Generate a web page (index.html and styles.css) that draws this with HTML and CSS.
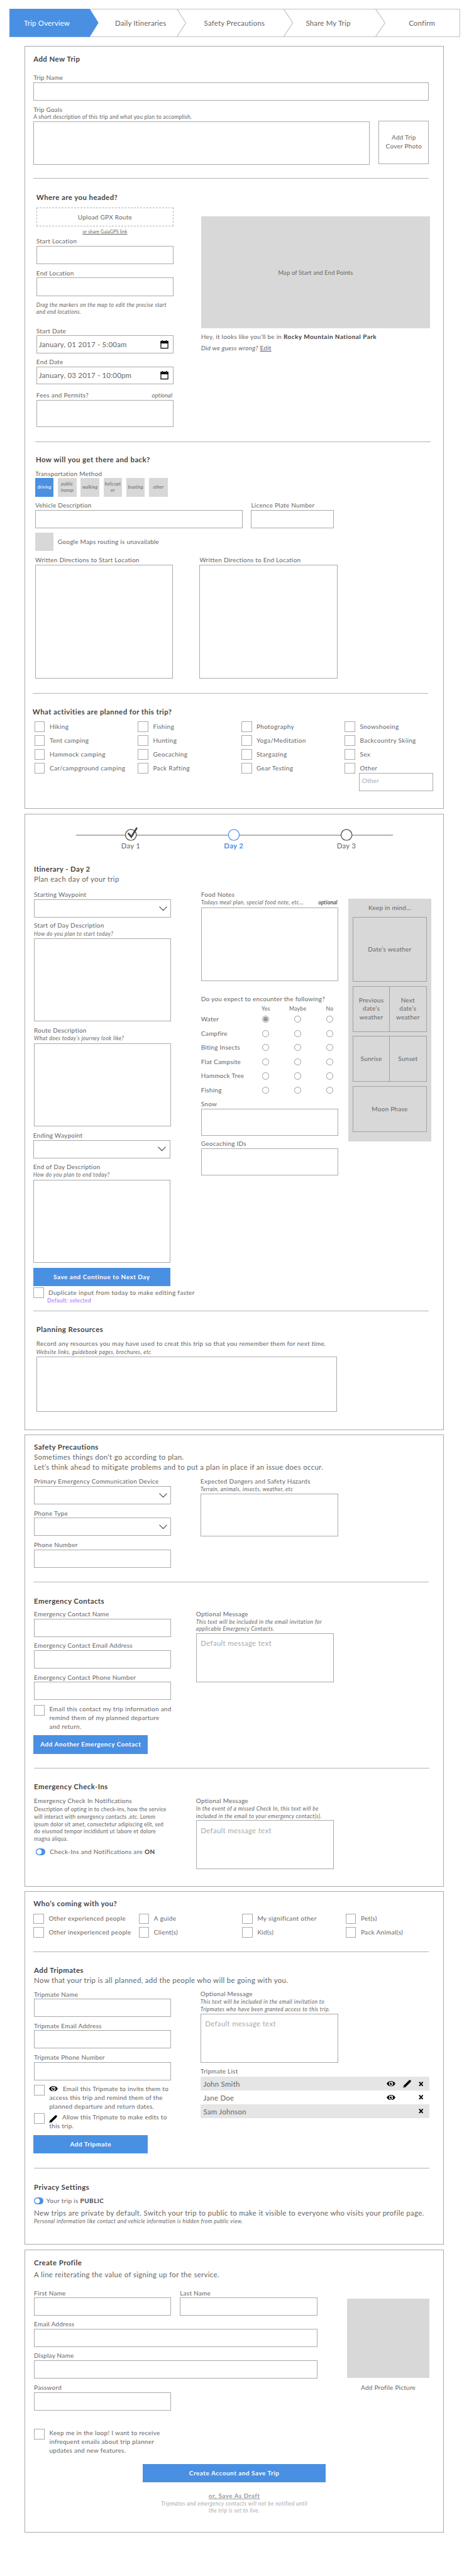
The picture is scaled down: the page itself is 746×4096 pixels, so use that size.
FILE: index.html
```html
<!DOCTYPE html>
<html lang="en">
<head>
<meta charset="utf-8">
<title>Trip Planner</title>
<link rel="stylesheet" href="styles.css">
</head>
<body>
<svg class="defs" width="0" height="0" aria-hidden="true">
  <symbol id="eye" viewBox="0 0 15 9"><path d="M0 4.5C2 1.5 4.600 0 7.500 0S13 1.500 15 4.500C13 7.500 10.400 9 7.500 9S2 7.500 0 4.500Z" fill="#000"/><circle cx="7.500" cy="4.500" r="3.500" fill="#fff"/><circle cx="7.500" cy="4.500" r="2.100" fill="#000"/><circle cx="8.200" cy="3.700" r=".9" fill="#fff"/></symbol>
  <symbol id="pencil" viewBox="0 0 14 14"><path d="M.3 13.700.9 10.300 9.900 1.300Q11.600-.3 13.200.9 14.200 2.200 12.900 4L3.800 13Z" fill="#000"/><path d="M1.300 11.100 2.900 12.700 1.100 13Z" fill="#fff"/></symbol>
  <symbol id="cross" viewBox="0 0 8 8"><path d="M1.200 1 6.800 7M6.800 1 1.200 7" stroke="#000" stroke-width="1.900"/><path d="M.3.900H2.600M5.400.900H7.700M.3 7.100H2.600M5.400 7.100H7.700" stroke="#000" stroke-width=".9"/></symbol>
  <symbol id="calendar" viewBox="0 0 14 15"><path d="M1 2H13V13.500H1Z" fill="#fff" stroke="#000" stroke-width="1.300"/><path d="M.4 1.500H13.600V5.500H.4Z" fill="#000"/><path d="M3.700 0V2.800M10.300 0V2.800" stroke="#000" stroke-width="1.800"/><path d="M3.700 1.600V3.200M10.300 1.600V3.200" stroke="#888" stroke-width=".7"/></symbol>
  <symbol id="chevron" viewBox="0 0 14 8"><path d="M.6.600 7 7.200 13.400.6" fill="none" stroke="#444" stroke-width="1.200"/></symbol>
</svg>
<div class="page">
  <nav class="steps">
    <svg class="steps-shape" width="769" height="48" viewBox="0 0 769 48"><path d="M.5.500H768.500V47.500H.5Z" fill="none" stroke="#b9b9b9"/><path d="M0 0H137L152 24 137 48H0Z" fill="#4a90e2"/><path d="M286 .5 301 24 286 47.500M468 .5 483.500 24 468 47.500M625 .5 641 24 625 47.500" fill="none" stroke="#a5a5a5"/></svg>
    <span class="step active">Trip Overview</span><span class="step">Daily Itineraries</span><span class="step">Safety Precautions</span><span class="step">Share My Trip</span><span class="step">Confirm</span>
  </nav>

  <main>
  <div class="panel panel-overview">
    <section class="trip">
      <h2 class="wide">Add New Trip</h2>
      <label class="wide">Trip Name</label>
      <div class="box wide"></div>
      <label class="wide">Trip Goals</label>
      <p class="hint roman wide">A short description of this trip and what you plan to accomplish.</p>
      <div class="box"></div>
      <div class="box cover">Add Trip<br>Cover Photo</div>
    </section>
    <hr class="hr-57">
    <section class="where">
      <div class="col where-form">
        <h2>Where are you headed?</h2>
        <div class="upload">Upload GPX Route</div>
        <a class="share">or share GaiaGPS link</a>
        <label>Start Location</label>
        <div class="box"></div>
        <label>End Location</label>
        <div class="box"></div>
        <p class="hint drag">Drag the markers on the map to edit the precise start<br>and end locations.</p>
        <label>Start Date</label>
        <div class="box date"><span>January, 01 2017 - 5:00am</span><svg width="14" height="15"><use href="#calendar"/></svg></div>
        <label>End Date</label>
        <div class="box date"><span>January, 03 2017 - 10:00pm</span><svg width="14" height="15"><use href="#calendar"/></svg></div>
        <label class="split"><span>Fees and Permits?</span><em>optional</em></label>
        <div class="box"></div>
      </div>
      <div class="where-map">
        <div class="map">Map of Start and End Points</div>
        <p class="guess">Hey, it looks like you’ll be in <b>Rocky Mountain National Park</b></p>
        <p class="wrong"><em>Did we guess wrong?</em> <u>Edit</u></p>
      </div>
    </section>
    <hr class="hr-60">
    <section class="travel col">
      <h2>How will you get there and back?</h2>
      <label>Transportation Method</label>
      <div class="tiles"><span class="tile on">driving</span><span class="tile">public<br>transp</span><span class="tile">walking</span><span class="tile">helicopt<br>er</span><span class="tile">boating</span><span class="tile">other</span></div>
      <div class="pair vehicle"><label>Vehicle Description</label><label>Licence Plate Number</label></div>
      <div class="pair vehicle"><div class="box"></div><div class="box"></div></div>
      <div class="routing"><span class="swatch"></span>Google Maps routing is unavailable</div>
      <div class="pair written"><label>Written Directions to Start Location</label><label>Written Directions to End Location</label></div>
      <div class="pair written"><div class="box"></div><div class="box"></div></div>
    </section>
    <hr class="hr-56">
    <section class="activities">
      <h2>What activities are planned for this trip?</h2>
      <div class="checks">
        <span class="check">Hiking</span><span class="check">Fishing</span><span class="check">Photography</span><span class="check">Snowshoeing</span>
        <span class="check">Tent camping</span><span class="check">Hunting</span><span class="check">Yoga/Meditation</span><span class="check">Backcountry Skiing</span>
        <span class="check">Hammock camping</span><span class="check">Geocaching</span><span class="check">Stargazing</span><span class="check">Sex</span>
        <span class="check">Car/campground camping</span><span class="check">Pack Rafting</span><span class="check">Gear Testing</span><span class="check">Other</span>
      </div>
      <div class="box other">Other</div>
    </section>
  </div>

  <div class="panel panel-itinerary">
    <div class="stepper">
      <svg width="541" height="26" viewBox="0 0 541 26"><path d="M0 14H541" stroke="#b3b3b3" stroke-width="2"/><g fill="#fff" stroke-width="1.300"><circle cx="93.500" cy="13.500" r="9.300" stroke="#444"/><circle cx="269.200" cy="13.500" r="9.300" stroke="#4a90e2"/><circle cx="461.500" cy="13.500" r="9.300" stroke="#444"/></g><path d="M89.500 11.300 94.300 16.900 103.300 2.200" fill="none" stroke="#444" stroke-width="3" stroke-linecap="round"/></svg>
      <div class="days"><span>Day 1</span><b>Day 2</b><span>Day 3</span></div>
    </div>
    <h2 class="day-title">Itinerary - Day 2</h2>
    <p class="sub day-sub">Plan each day of your trip</p>
    <section class="day">
      <div class="col day-left">
        <label>Starting Waypoint</label>
        <div class="box select"><svg width="14" height="8"><use href="#chevron"/></svg></div>
        <label>Start of Day Description</label>
        <p class="hint">How do you plan to start today?</p>
        <div class="box"></div>
        <label>Route Description</label>
        <p class="hint high">What does today’s journey look like?</p>
        <div class="box"></div>
        <label class="nudge">Ending Waypoint</label>
        <div class="box select nudge"><svg width="14" height="8"><use href="#chevron"/></svg></div>
        <label class="nudge">End of Day Description</label>
        <p class="hint high nudge">How do you plan to end today?</p>
        <div class="box nudge"></div>
        <div class="button nudge">Save and Continue to Next Day</div>
        <span class="check nudge">Duplicate input from today to make editing faster</span>
        <b class="default">Default: selected</b>
      </div>
      <div class="col day-mid">
        <label>Food Notes</label>
        <p class="hint high split"><span>Todays meal plan, special food note, etc…</span><b>optional</b></p>
        <div class="box"></div>
        <label>Do you expect to encounter the following?</label>
        <div class="radios head"><span></span><span>Yes</span><span>Maybe</span><span>No</span></div>
        <div class="radios"><span>Water</span><i class="on"></i><i></i><i></i></div>
        <div class="radios"><span>Campfire</span><i></i><i></i><i></i></div>
        <div class="radios"><span>Biting Insects</span><i></i><i></i><i></i></div>
        <div class="radios"><span>Flat Campsite</span><i></i><i></i><i></i></div>
        <div class="radios"><span>Hammock Tree</span><i></i><i></i><i></i></div>
        <div class="radios"><span>Fishing</span><i></i><i></i><i></i></div>
        <label>Snow</label>
        <div class="box"></div>
        <label>Geocaching IDs</label>
        <div class="box"></div>
      </div>
      <aside class="mind">
        <span class="mind-title">Keep in mind…</span>
        <span class="cell wide">Date’s weather</span>
        <span class="cell">Previous<br>date’s<br>weather</span><span class="cell second">Next<br>date’s<br>weather</span>
        <span class="cell">Sunrise</span><span class="cell second">Sunset</span>
        <span class="cell wide">Moon Phase</span>
      </aside>
    </section>
    <hr class="hr-57">
    <section class="resources col">
      <h2>Planning Resources</h2>
      <label>Record any resources you may have used to creat this trip so that you remember them for next time.</label>
      <p class="hint">Website links, guidebook pages, brochures, etc</p>
      <div class="box"></div>
    </section>
  </div>

  <div class="panel panel-safety">
    <section class="safety">
      <h2>Safety Precautions</h2>
      <p class="sub">Sometimes things don’t go according to plan.<br>Let’s think ahead to mitigate problems and to put a plan in place if an issue does occur.</p>
      <div class="cols">
        <div class="col safety-left">
          <label>Primary Emergency Communication Device</label>
          <div class="box select"><svg width="14" height="8"><use href="#chevron"/></svg></div>
          <label>Phone Type</label>
          <div class="box select"><svg width="14" height="8"><use href="#chevron"/></svg></div>
          <label>Phone Number</label>
          <div class="box"></div>
        </div>
        <div class="col safety-right">
          <label>Expected Dangers and Safety Hazards</label>
          <p class="hint">Terrain, animals, insects, weather, etc</p>
          <div class="box"></div>
        </div>
      </div>
    </section>
    <hr class="hr-57">
    <section class="contacts">
      <h2>Emergency Contacts</h2>
      <div class="cols near">
        <div class="col contacts-left">
          <label>Emergency Contact Name</label>
          <div class="box"></div>
          <label>Emergency Contact Email Address</label>
          <div class="box"></div>
          <label>Emergency Contact Phone Number</label>
          <div class="box"></div>
          <span class="check long">Email this contact my trip information and<br>remind them of my planned departure<br>and return.</span>
          <div class="button short">Add Another Emergency Contact</div>
        </div>
        <div class="col contacts-right">
          <label>Optional Message</label>
          <p class="hint">This text will be included in the email invitation for<br>applicable Emergency Contacts.</p>
          <div class="box message">Default message text</div>
        </div>
      </div>
    </section>
    <hr class="hr-58">
    <section class="checkins">
      <h2>Emergency Check-Ins</h2>
      <div class="cols near">
        <div class="col checkins-left">
          <label>Emergency Check In Notifications</label>
          <p class="hint roman desc">Description of opting in to check-ins, how the service<br>will interact with emergency contacts ,etc. Lorem<br>ipsum dolor sit amet, consectetur adipiscing elit, sed<br>do eiusmod tempor incididunt ut labore et dolore<br>magna aliqua.</p>
          <p class="toggle"><i></i><span>Check-Ins and Notifications are <b>ON</b></span></p>
        </div>
        <div class="col checkins-right">
          <label>Optional Message</label>
          <p class="hint">In the event of a missed Check In, this text will be<br>included in the email to your emergency contact(s).</p>
          <div class="box message">Default message text</div>
        </div>
      </div>
    </section>
  </div>

  <div class="panel panel-share">
    <section class="who">
      <h2>Who’s coming with you?</h2>
      <div class="checks">
        <span class="check">Other experienced people</span><span class="check">A guide</span><span class="check">My significant other</span><span class="check">Pet(s)</span>
        <span class="check">Other inexperienced people</span><span class="check">Client(s)</span><span class="check">Kid(s)</span><span class="check">Pack Animal(s)</span>
      </div>
    </section>
    <hr class="hr-57">
    <section class="mates">
      <h2>Add Tripmates</h2>
      <p class="sub">Now that your trip is all planned, add the people who will be going with you.</p>
      <div class="cols">
        <div class="col mates-left">
          <label>Tripmate Name</label>
          <div class="box"></div>
          <label>Tripmate Email Address</label>
          <div class="box"></div>
          <label>Tripmate Phone Number</label>
          <div class="box"></div>
          <span class="check long"><span><svg class="glyph" width="15" height="9"><use href="#eye"/></svg>Email this Tripmate to invite them to<br>access this trip and remind them of the<br>planned departure and return dates.</span></span>
          <span class="check long"><span><svg class="glyph pen" width="14" height="14"><use href="#pencil"/></svg>Allow this Tripmate to make edits to<br>this trip.</span></span>
          <div class="button short">Add Tripmate</div>
        </div>
        <div class="col mates-right">
          <label>Optional Message</label>
          <p class="hint">This text will be included in the email invitation to<br>Tripmates who have been granted access to this trip.</p>
          <div class="box message">Default message text</div>
          <label>Tripmate List</label>
          <ul class="list">
            <li><span>John Smith</span><svg width="15" height="9"><use href="#eye"/></svg><svg width="14" height="14"><use href="#pencil"/></svg><svg width="8" height="8"><use href="#cross"/></svg></li>
            <li><span>Jane Doe</span><svg width="15" height="9"><use href="#eye"/></svg><i></i><svg width="8" height="8"><use href="#cross"/></svg></li>
            <li><span>Sam Johnson</span><i></i><i></i><svg width="8" height="8"><use href="#cross"/></svg></li>
          </ul>
        </div>
      </div>
    </section>
    <hr class="hr-58">
    <section class="privacy col">
      <h2>Privacy Settings</h2>
      <p class="toggle"><i></i><span>Your trip is <b>PUBLIC</b></span></p>
      <p class="sub">New trips are private by default. Switch your trip to public to make it visible to everyone who visits your profile page.</p>
      <p class="hint">Personal information like contact and vehicle information is hidden from public view.</p>
    </section>
  </div>

  <div class="panel panel-profile">
    <section class="profile">
      <h2>Create Profile</h2>
      <p class="sub">A line reiterating the value of signing up for the service.</p>
      <div class="profile-row">
        <div class="profile-form">
          <label>First Name</label><label>Last Name</label>
          <div class="box"></div><div class="box"></div>
          <label class="wide">Email Address</label>
          <div class="box wide"></div>
          <label class="wide">Display Name</label>
          <div class="box wide"></div>
          <label class="wide">Password</label>
          <div class="box"></div>
          <span class="check long wide">Keep me in the loop! I want to receive<br>infrequent emails about trip planner<br>updates and new features.</span>
        </div>
        <div class="avatar"><div class="avatar-pic"></div><span>Add Profile Picture</span></div>
      </div>
      <div class="submit">
        <div class="button">Create Account and Save Trip</div>
        <a class="draft">or, Save As Draft</a>
        <p class="hint">Tripmates and emergency contacts will not be notified until<br>the trip is set to live.</p>
      </div>
    </section>
  </div>
  </main>
</div>
</body>
</html>
```
FILE: styles.css
```css
* { box-sizing: border-box; margin: 0; padding: 0; }
html, body { background: #fff; }
body { overflow-x: hidden; }
.defs { position: absolute; }

.page {
  zoom: 0.93218;
  width: 800px;
  height: 4394px;
  padding-top: 15px;
  overflow: hidden;
  font: 10.7px/14px Lato, "Liberation Sans", sans-serif;
  letter-spacing: .28px;
  color: #666;
}

/* text */
h2 { font-size: 12.25px; line-height: 16px; font-weight: bold; letter-spacing: .48px; color: #444; }
b { color: #444; letter-spacing: .5px; }
label { display: block; padding-bottom: .6px; white-space: nowrap; }
.sub { font-size: 12.25px; line-height: 17.2px; letter-spacing: .36px; white-space: nowrap; }
.hint { font-size: 9.2px; line-height: 12.3px; letter-spacing: .44px; font-style: italic; padding-bottom: .4px; white-space: nowrap; }
.hint.roman { font-style: normal; letter-spacing: .22px; }
.hint.high { padding-bottom: 1.700px; }
.hint b { font-size: 9.2px; font-weight: 600; letter-spacing: .1px; }
.split { display: flex; justify-content: space-between; padding-right: 2px; }

/* frames and shared controls */
.panel { width: 715px; margin-left: 42px; border: 1px solid #aaa; }
.col { display: grid; grid-template-columns: minmax(0, 1fr); align-items: end; align-content: start; }
.box { align-self: stretch; border: 1px solid #aaa; }
.wide { grid-column: 1 / -1; }
hr { border: 0; height: 1px; width: 675px; background: #b4b4b4; }
.hr-56 { margin-left: 12.500px; }
.hr-57 { margin-left: 14px; }
.hr-58 { margin-left: 15px; }
.hr-60 { margin-left: 17px; }
.nudge { margin-left: -1.500px; margin-right: 1.500px; }
.select { display: flex; align-items: center; justify-content: flex-end; padding-right: 6px; }
.message { padding: 9px 7px; font-size: 12.25px; line-height: 16px; color: #aaa; letter-spacing: .36px; }
.button { display: grid; place-items: center; height: 31.700px; background: #4a90e2; color: #fff; font-weight: bold; letter-spacing: .55px; }
.button.short { width: 195.500px; margin-left: -1px; }
.check { display: flex; align-items: center; gap: 8px; height: 16px; letter-spacing: .38px; white-space: nowrap; }
.check::before { content: ""; flex: none; width: 16px; height: 16px; border: 1px solid #aaa; }
.check.long { height: auto; align-items: flex-start; line-height: 15px; letter-spacing: .3px; }
.checks { display: grid; grid-auto-rows: 16px; row-gap: 7.400px; }
.toggle { display: flex; align-items: center; gap: 5px; letter-spacing: .38px; }
.toggle i { width: 16px; height: 11.500px; border-radius: 6px; background: radial-gradient(circle at 5.800px 50%, #fff 4.100px, #4a90e2 4.600px); }
.cols { display: grid; grid-template-columns: 234px 235px; column-gap: 50px; }
.cols.near { column-gap: 42.500px; }

/* progress bar */
.steps { position: relative; display: grid; grid-template-columns: repeat(5, 160px); height: 48px; margin-bottom: 15px; align-items: center; text-align: center; font-size: 12.25px; letter-spacing: .22px; }
.steps-shape { position: absolute; left: 16px; top: 0; }
.step { position: relative; }
.step.active { color: #fff; }

/* trip overview */
.panel-overview { height: 1302px; }
.trip { display: grid; grid-template: 30.300px 31.200px 31.500px 22.400px 12.600px 74px / 574px 86px; column-gap: 15px; height: 225px; padding-left: 14px; align-items: end; align-content: start; }
.cover { display: grid; place-content: center; text-align: center; line-height: 15px; margin: -1.500px 0 1.500px; }
.where { display: grid; grid-template-columns: 234px 391px; column-gap: 47px; height: 448px; padding-left: 19px; }
.where-form { grid-template-rows: 40.300px 40.700px 15px 18px 32px 22.300px 31.700px 33.700px 33.300px 31px 22px 31px 26px 47px; }
.upload { height: 31.500px; display: grid; place-items: center; border: 1px dashed #b0b0b0; }
.share { justify-self: center; font-size: 7.700px; line-height: 11px; letter-spacing: .2px; text-decoration: underline; }
.hint.drag { line-height: 12px; letter-spacing: .4px; padding: 0; }
.date { display: flex; align-items: center; justify-content: space-between; padding: 0 7px 0 3px; font-size: 12.25px; letter-spacing: .25px; }
.split em { letter-spacing: .1px; font-size: 10px; }
.map { display: grid; place-items: center; height: 191.500px; margin-top: 64px; background: #d8d8d8; font-size: 10px; letter-spacing: .2px; }
.guess { margin-top: 7.400px; }
.wrong { margin-top: 5px; }
.travel { grid-template-rows: 38.300px 23.200px 31.500px 23px 31px 39px 23px 195px; height: 428px; padding-left: 17px; }
.travel h2 { padding-left: 1px; }
.tiles { display: flex; gap: 7.400px; }
.tile { display: grid; place-content: center; width: 31.500px; height: 31.500px; background: #d8d8d8; font-size: 7.700px; line-height: 11px; font-style: italic; letter-spacing: .25px; text-align: center; }
.tile.on { background: #4a90e2; color: #fff; }
.pair { display: grid; align-self: stretch; align-items: end; }
.vehicle { grid-template-columns: 353.500px 141px; column-gap: 15px; }
.written { grid-template-columns: 234.500px 235px; column-gap: 46px; }
.routing { display: flex; align-items: center; gap: 7px; height: 31.500px; line-height: 19px; }
.swatch { width: 31.500px; height: 31.500px; background: #d8d8d8; }
.activities { padding: 24.300px 0 0 12.500px; }
.activities .checks { grid-template-columns: repeat(3, 176.500px) auto; margin: 8.700px 0 0 3px; }
.other { width: 126.500px; height: 31px; margin-left: 557px; padding: 6px 4px; color: #aaa; }

/* itinerary */
.panel-itinerary { height: 1051px; margin-top: 8px; }
.stepper { width: 541px; margin: 22px 0 0 86.500px; height: 39px; }
.stepper svg { display: block; }
.days { display: grid; grid-template-columns: 187px 164.400px 220.200px; margin-top: -2px; text-align: center; font-size: 12.25px; line-height: 16px; }
.days b { color: #4a90e2; letter-spacing: .3px; }
.day-title { margin: 25.300px 0 0 15px; }
.day-sub { margin-left: 15px; }
.day { display: grid; grid-template-columns: 234px 234.500px 141px; column-gap: 17px; height: 727px; padding-left: 15px; }
.day-left { grid-template-rows: 25.500px 31.300px 20.900px 14.500px 142px 22.500px 14.600px 142px 22.700px 31.200px 22.300px 14.500px 142.200px 39.500px 19.300px 11.500px; }
.day-mid { grid-template-rows: 24.700px 14.500px 126.300px 37.900px 14.700px repeat(6, 24.200px) 19.200px 47px 20.500px 46.500px; margin-left: 34px; margin-right: -34px; }
.mind { margin: 24.800px -34px 0 34px; }
.default { padding-left: 22.500px; font-size: 9.2px; line-height: 12px; color: #bd8cff; letter-spacing: .35px; }
.radios { display: grid; grid-template-columns: 83.200px repeat(3, 54.600px); align-self: stretch; align-items: center; white-space: nowrap; }
.radios i { justify-self: center; width: 12px; height: 12px; border: 1px solid #999; border-radius: 50%; }
.radios i.on { background: radial-gradient(circle, #999 3.600px, #fff 4.200px); }
.radios.head { font-size: 9.2px; text-align: center; align-items: end; margin-bottom: -2px; letter-spacing: .35px; }
.mind { display: grid; grid-template: 31px 110px 7.700px 78px 7px 78px 8px 78px / 1fr 1fr; height: 413.400px; padding: 0 7.500px; background: #d8d8d8; text-align: center; line-height: 14.600px; }
.mind-title { grid-column: 1 / -1; align-self: end; padding-bottom: 8.400px; }
.cell { display: grid; place-content: center; border: 1px solid #a2a2a2; }
.cell:nth-child(2) { grid-row: 2; }
.cell:nth-child(3), .cell:nth-child(4) { grid-row: 4; }
.cell:nth-child(5), .cell:nth-child(6) { grid-row: 6; }
.cell:nth-child(7) { grid-row: 8; }
.cell.second { border-left: 0; }
.resources { grid-template-rows: 39.800px 23.600px 14.100px 94px; width: 531.500px; padding-left: 19px; }

/* safety */
.panel-safety { height: 771px; margin-top: 8px; }
.safety { height: 250px; padding: 13.300px 0 0 15px; }
.safety-left { grid-template-rows: 23.200px 31.500px 22.500px 31px 23px 31px; }
.safety-right { grid-template-rows: 23.100px 12.800px 73.500px; }
.contacts { height: 316.500px; padding: 24.700px 0 0 15px; }
.contacts-left { grid-template-rows: 21.300px 31px 23px 31px 23px 31px 53px 38.700px; }
.contacts-right { grid-template-rows: 21.200px 25.100px 83.500px; }
.checkins { padding: 24px 0 0 15px; }
.checkins-left { grid-template-rows: 22.900px 65.100px 21.500px; }
.checkins-right { grid-template-rows: 22.900px 25.600px 83px; }
.desc { line-height: 12.600px; }
.checkins .toggle { gap: 7.500px; padding-left: 3.500px; }

/* sharing */
.panel-share { height: 603px; margin-top: 8px; }
.who { height: 101.500px; padding: 13px 0 0 14px; }
.who .checks { grid-template-columns: 179.500px 176.500px 176.500px auto; margin-top: 9px; }
.mates { height: 368.500px; padding: 23.800px 0 0 15px; }
.mates-left { grid-template-rows: 23.200px 31px 22.500px 31px 23px 31.500px 52.400px 33.900px 38.700px; }
.mates-right { grid-template-rows: 22.100px 26.100px 83.500px 22.400px auto; }
.glyph { vertical-align: -.5px; margin-right: 8px; }
.glyph.pen { vertical-align: -3px; margin: -3px 8px -3px 0; }
.list { width: 391px; margin-top: 2.100px; list-style: none; font-size: 12.25px; letter-spacing: .3px; }
.list li { display: grid; grid-template-columns: 1fr 15px 14px 8px; column-gap: 12.500px; align-items: center; height: 23.500px; padding: 0 11px 0 5px; }
.list li:nth-child(odd) { background: #e5e5e5; }
.privacy { grid-template-rows: 40.800px 21.100px 23.100px 12.400px; padding-left: 15px; }

/* profile */
.panel-profile { height: 483px; margin-top: 8px; }
.profile { padding: 14.300px 0 0 15px; }
.profile > .sub { margin-top: 2.900px; }
.profile-row { display: flex; gap: 50.500px; }
.profile-form { display: grid; grid-template: 30.600px 31px 22.500px 31.500px 22px 31.500px 23px 31.500px 76px / 234px 234.500px; column-gap: 15px; align-items: end; }
.avatar { display: flex; flex-direction: column; align-items: center; width: 141px; }
.avatar-pic { width: 141px; height: 135.500px; margin: 32px 0 10.300px; background: #d8d8d8; }
.submit { display: flex; flex-direction: column; align-items: center; width: 312.500px; margin: 15px 0 0 185.500px; text-align: center; }
.submit .button { width: 312.500px; }
.draft { margin-top: 15.900px; font-weight: bold; letter-spacing: .5px; color: #999; text-decoration: underline; }
.submit .hint { margin-top: .500px; line-height: 12px; color: #aaa; }
```
